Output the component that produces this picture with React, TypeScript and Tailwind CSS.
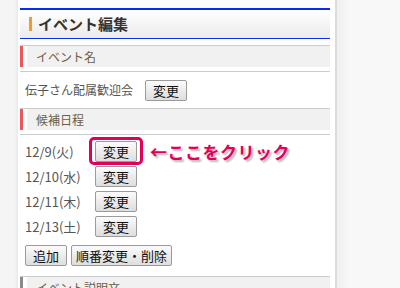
const font = "font-['Noto_Sans_CJK_JP','Noto_Sans',sans-serif]";

function Btn({ label, className = "px-[7px]" }: { label: string; className?: string }) {
  return (
    <button
      type="button"
      className={`h-[21px] rounded-[2px] border border-[#9a9a9a] bg-gradient-to-b from-[#fbfbfb] to-[#dedede] text-[13px] leading-none text-[#111] ${className}`}
    >
      {label}
    </button>
  );
}

function SectionHead({ title, bar = "bg-[#f0555a]" }: { title: string; bar?: string }) {
  return (
    <div className="border-y border-[#cccccc] pb-[4px]">
      <div className="flex h-[21px]">
        <div className={`w-[3px] ${bar}`} />
        <div className="ml-[4px] flex flex-1 items-center bg-[#f1f1f1] pl-[9px] text-[12px] text-[#6e5c45]">
          {title}
        </div>
      </div>
    </div>
  );
}

const dates = ["12/9(火)", "12/10(水)", "12/11(木)", "12/13(土)"];

export default function App() {
  return (
    <div className={`flex h-[288px] w-[400px] overflow-hidden bg-white ${font}`}>
      {/* left gutter */}
      <div className="w-[18px] bg-gradient-to-r from-[#f5f5f5] from-80% to-[#e9e9e9]" />

      {/* main */}
      <div className="w-[317px] pl-[2px] pr-[5px] pt-[8px]">
        <div className="flex h-[31px] items-center border-t-2 border-b border-t-[#0a2bf0] border-b-[#0a2bf0] bg-gradient-to-b from-white to-[#ebebeb] pl-[9px]">
          <div className="h-[14px] w-[3px] bg-[#f29a2e]" />
          <span className="ml-[6px] text-[15px] font-bold text-[#333]">イベント編集</span>
        </div>

        <div className="mt-[6px]">
          <SectionHead title="イベント名" />
          <div className="flex h-[36px] items-center pl-[5px] text-[12px] text-[#555]">
            <span className="w-[120px]">伝子さん配属歓迎会</span>
            <Btn label="変更" />
          </div>

          <SectionHead title="候補日程" />
          <div className="flex flex-col gap-[4px] pl-[5px] pt-[6px] text-[13px] text-[#555]">
            {dates.map((d, i) => (
              <div key={d} className="flex h-[21px] items-center">
                <span className="w-[70px]">{d}</span>
                <div className="relative">
                  <Btn label="変更" />
                  {i === 0 ? (
                    <>
                      <div className="absolute -bottom-[3px] -left-[6px] -right-[6px] -top-[4px] rounded-[5px] border-[3px] border-[#e3005b]" />
                      <span className="absolute left-[55px] top-1/2 -translate-y-1/2 whitespace-nowrap text-[17px] font-bold tracking-[0.5px] text-[#e3005b] [text-shadow:2px_2px_2px_rgba(0,0,0,0.3)]">
                        ←ここをクリック
                      </span>
                    </>
                  ) : null}
                </div>
              </div>
            ))}
            <div className="mt-[4px] flex gap-[4px]">
              <Btn label="追加" />
              <Btn label="順番変更・削除" className="px-[4px]" />
            </div>
          </div>

          <div className="mt-[10px]">
            <SectionHead title="イベント説明文" bar="bg-[#8a8a8a]" />
          </div>
        </div>
      </div>

      {/* right sidebar */}
      <div className="flex flex-1">
        <div className="w-[2px] bg-[#dcdcdc]" />
        <div className="flex-1 bg-gradient-to-r from-[#efefef] to-[#f8f8f8] to-[20%]" />
      </div>
    </div>
  );
}
